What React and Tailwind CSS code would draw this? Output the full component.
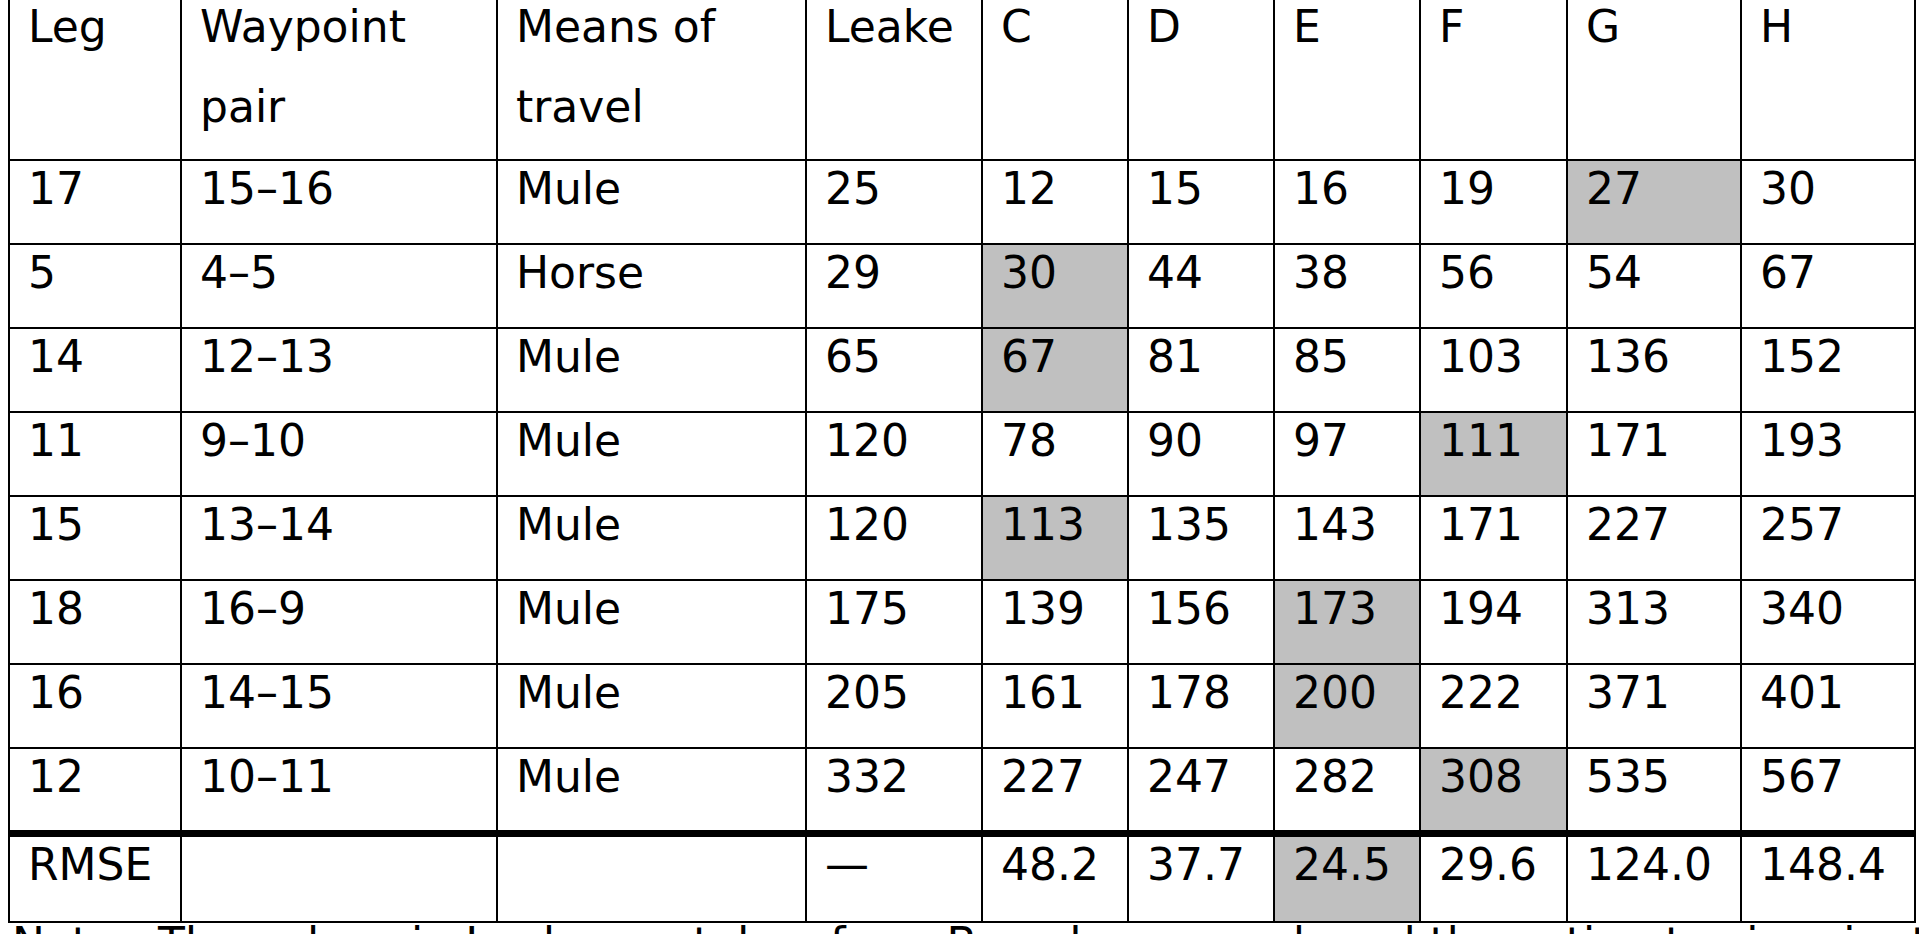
const rows = [
  { leg: '17', pair: '15–16', means: 'Mule', vals: ['25', '12', '15', '16', '19', '27', '30'], hi: 5 },
  { leg: '5', pair: '4–5', means: 'Horse', vals: ['29', '30', '44', '38', '56', '54', '67'], hi: 1 },
  { leg: '14', pair: '12–13', means: 'Mule', vals: ['65', '67', '81', '85', '103', '136', '152'], hi: 1 },
  { leg: '11', pair: '9–10', means: 'Mule', vals: ['120', '78', '90', '97', '111', '171', '193'], hi: 4 },
  { leg: '15', pair: '13–14', means: 'Mule', vals: ['120', '113', '135', '143', '171', '227', '257'], hi: 1 },
  { leg: '18', pair: '16–9', means: 'Mule', vals: ['175', '139', '156', '173', '194', '313', '340'], hi: 3 },
  { leg: '16', pair: '14–15', means: 'Mule', vals: ['205', '161', '178', '200', '222', '371', '401'], hi: 3 },
  { leg: '12', pair: '10–11', means: 'Mule', vals: ['332', '227', '247', '282', '308', '535', '567'], hi: 4 },
]

const headers = [['Leg'], ['Waypoint', 'pair'], ['Means of', 'travel'], ['Leake'], ['C'], ['D'], ['E'], ['F'], ['G'], ['H']]

const cellClass = 'border-r-2 border-black pl-[18px] pt-[6px] leading-[44px] whitespace-nowrap'

function Cell({ children, gray, last, thick }) {
  return (
    <div
      className={
        cellClass +
        (gray ? ' bg-[#c0c0c0]' : ' bg-white') +
        (thick ? ' h-[88px] border-b-[7px]' : last ? ' h-[86px] border-b-2' : ' h-[84px] border-b-2')
      }
    >
      {children}
    </div>
  )
}

export default function App() {
  return (
    <div className="h-[934px] w-[1919px] overflow-hidden bg-white text-[44px] text-black [font-family:'DejaVu_Sans',Verdana,sans-serif]">
      <div className="-mt-[15px] ml-[8px] grid w-[1908px] grid-cols-[172px_316px_309px_176px_146px_146px_146px_147px_174px_174px] border-l-2 border-t-2 border-black">
        {headers.map((lines, i) => (
          <div key={i} className="h-[174px] border-b-2 border-r-2 border-black pl-[18px] leading-[80px] whitespace-nowrap">
            {lines.map((l) => (
              <div key={l}>{l}</div>
            ))}
          </div>
        ))}

        {rows.map((r, ri) => {
          const thick = ri === rows.length - 1
          return [
            <Cell key={ri + 'a'} thick={thick}>{r.leg}</Cell>,
            <Cell key={ri + 'b'} thick={thick}>{r.pair}</Cell>,
            <Cell key={ri + 'c'} thick={thick}>{r.means}</Cell>,
            ...r.vals.map((v, vi) => (
              <Cell key={ri + 'v' + vi} thick={thick} gray={vi === r.hi}>
                {v}
              </Cell>
            )),
          ]
        })}

        <Cell last>RMSE</Cell>
        <Cell last></Cell>
        <Cell last></Cell>
        <Cell last>—</Cell>
        <Cell last>48.2</Cell>
        <Cell last>37.7</Cell>
        <Cell last gray>24.5</Cell>
        <Cell last>29.6</Cell>
        <Cell last>124.0</Cell>
        <Cell last>148.4</Cell>
      </div>
      <p className="mt-[2px] pl-[12px] leading-[38px] whitespace-nowrap">
        Note. &nbsp;The values in Leake are taken from Based on record, and the estimates in minutes: (C) Tobler, (D) Tobler’s correction, (E) Modified Tobler, (F) Naismith
      </p>
    </div>
  )
}
